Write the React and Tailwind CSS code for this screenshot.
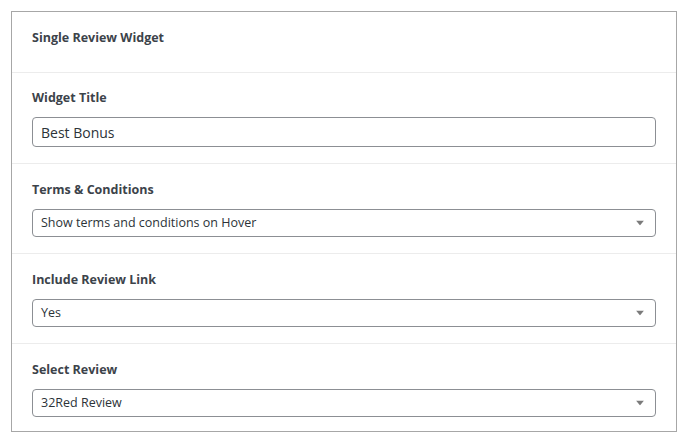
import React from "react";

const font = { fontFamily: '"Open Sans", "Noto Sans", sans-serif' };

function Arrow() {
  return (
    <svg width="8" height="5" viewBox="0 0 8 5" className="absolute right-[11px] top-1/2 -translate-y-1/2">
      <path d="M0 0 L8 0 L4 5 Z" fill="#7b7b7b" />
    </svg>
  );
}

function Select({ value }) {
  return (
    <div className="relative h-[28px] rounded-[4px] border border-[#8c8f94] bg-white flex items-center pl-[8px] text-[12.5px] text-[#2c3338]">
      {value}
      <Arrow />
    </div>
  );
}

function Section({ label, children, last }) {
  return (
    <div className={"border-t border-[#ececec] px-[20px] pt-[18px] " + (last ? "pb-[14px]" : "pb-[16px]")}>
      <div className="h-[16px] leading-[16px] text-[12.5px] font-bold text-[#3c434a] mb-[11px]">{label}</div>
      {children}
    </div>
  );
}

export default function App() {
  return (
    <div className="w-[686px] h-[439px] bg-white pt-[11px] pl-[11px]" style={font}>
      <div className="w-[666px] border border-[#a7a7a7] bg-white">
        <div className="h-[60px] px-[20px] pt-[18px]">
          <div className="h-[16px] leading-[16px] text-[12.5px] font-bold text-[#3c434a]">Single Review Widget</div>
        </div>
        <div className="border-t border-[#ececec] px-[20px] pt-[17px] pb-[16px]">
          <div className="h-[16px] leading-[16px] text-[12.5px] font-bold text-[#3c434a] mb-[11px]">Widget Title</div>
          <div className="h-[30px] rounded-[4px] border border-[#8c8f94] bg-white flex items-center pl-[8px] text-[14px] text-[#2c3338]">
            Best Bonus
          </div>
        </div>
        <Section label="Terms & Conditions">
          <Select value="Show terms and conditions on Hover" />
        </Section>
        <Section label="Include Review Link">
          <Select value="Yes" />
        </Section>
        <Section label="Select Review" last>
          <Select value="32Red Review" />
        </Section>
      </div>
    </div>
  );
}
